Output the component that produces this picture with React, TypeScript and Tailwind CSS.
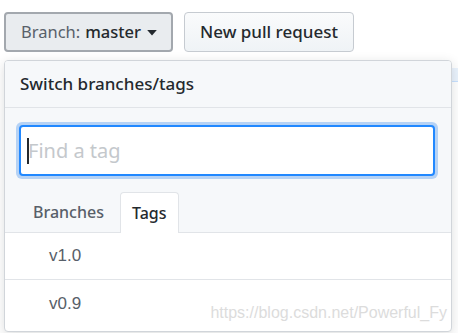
export default function App() {
  return (
    <div
      className="relative w-[458px] h-[333px] overflow-hidden bg-white"
      style={{ fontFamily: '"Noto Sans", "Liberation Sans", sans-serif' }}
    >
      {/* page content peeking out behind the menu */}
      <div className="absolute right-0 top-[68px] w-[10px] h-[14px] bg-[#eaf3fd] border-b border-[#c8e1ff]" />
      <div className="absolute right-0 top-[82px] w-[10px] h-[200px] border-l border-[#e1e4e8]" />

      <div className="flex gap-[11px] pl-[4px] pt-[12px]">
        <button className="flex items-center h-[40px] w-[169px] pl-[15px] rounded-[4px] border-2 border-[#a3a8ae] bg-[#e9ecef] text-[16.5px]">
          <span className="text-[#586069]">Branch:</span>
          <span className="ml-[5px] font-medium text-[#24292e]">master</span>
          <svg width="12" height="7" viewBox="0 0 12 8" className="ml-[5px]">
            <path d="M0.5 1 L11.5 1 L6 7.5 Z" fill="#24292e" />
          </svg>
        </button>
        <button className="h-[40px] w-[170px] rounded-[4px] border border-[#c6cbd1] bg-gradient-to-b from-[#fafbfc] to-[#eff3f6] text-[17px] font-medium text-[#24292e]">
          New pull request
        </button>
      </div>

      <div className="relative ml-[4px] mt-[8px] w-[448px] h-[272px] rounded-[4px] border border-[#d1d5da] bg-white shadow-[0_3px_12px_rgba(27,31,35,0.15)] overflow-hidden">
        <div className="bg-[#f6f8fa]">
          <div className="h-[47px] flex items-center pl-[15px] border-b border-[#e1e4e8] text-[17px] font-medium text-[#24292e]">
            Switch branches/tags
          </div>
          <div className="pl-[11px] pr-[13px] pt-[14px] pb-[13px]">
            <div className="h-[57px] rounded-[6px] bg-[#b5d2f5] p-[3px]">
              <div className="h-full rounded-[4px] border-2 border-[#2188ff] bg-white flex items-center pl-[6px]">
                <div className="w-[2px] h-[26px] bg-[#24292e]" />
                <span className="ml-[-1px] text-[20px] text-[#c4c8cc]">Find a tag</span>
              </div>
            </div>
          </div>
          <div className="flex items-end h-[41px] pl-[15px] border-b border-[#e1e4e8]">
            <div className="h-[40px] flex items-center pl-[13px] pr-[16px] text-[16px] font-medium text-[#586069]">Branches</div>
            <div className="h-[41px] -mb-px flex items-center px-[11px] rounded-t-[4px] border border-b-0 border-[#e1e4e8] bg-white text-[16px] font-medium text-[#24292e]">
              Tags
            </div>
          </div>
        </div>
        <div
          className="text-[17px] text-[#586069]"
          style={{ fontFamily: '"Liberation Sans", Arial, sans-serif' }}
        >
          <div className="h-[47px] flex items-center pl-[44px] border-b border-[#e1e4e8]">v1.0</div>
          <div className="h-[47px] flex items-center pl-[44px]">v0.9</div>
        </div>
        <div
          className="absolute right-[4px] bottom-[6px] text-[16px] text-[#dcdcdc]"
          style={{ fontFamily: '"Liberation Sans", Arial, sans-serif' }}
        >
          https://blog.csdn.net/Powerful_Fy
        </div>
      </div>
    </div>
  );
}
